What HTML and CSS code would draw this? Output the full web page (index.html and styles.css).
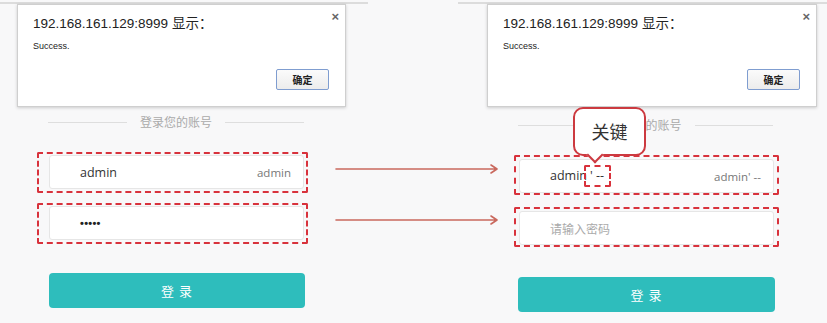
FILE: index.html
```html
<!DOCTYPE html>
<html lang="zh-CN">
<head>
<meta charset="utf-8">
<title>SQL 注入演示</title>
<link rel="stylesheet" href="styles.css">
</head>
<body>
<div class="stage">
  <section class="panel panel-left">
    <div class="strip"></div>
    <div class="dialog">
      <span class="close">×</span>
      <div class="d-title">192.168.161.129:8999 显示：</div>
      <div class="d-msg">Success.</div>
      <div class="d-actions"><button class="d-btn">确定</button></div>
    </div>
    <div class="form">
      <div class="divider"><span class="line"></span><span class="label">登录您的账号</span><span class="line"></span></div>
      <div class="mark mark-first"><div class="field"><span class="val">admin</span><span class="hint">admin</span></div></div>
      <div class="mark mark-second"><div class="field"><span class="dots">•••••</span></div></div>
      <button class="submit">登 录</button>
    </div>
  </section>

  <section class="panel panel-right">
    <div class="strip"></div>
    <div class="dialog">
      <span class="close">×</span>
      <div class="d-title">192.168.161.129:8999 显示：</div>
      <div class="d-msg">Success.</div>
      <div class="d-actions"><button class="d-btn">确定</button></div>
    </div>
    <div class="form">
      <div class="divider"><span class="line"></span><span class="label">登录您的账号</span><span class="line"></span></div>
      <div class="mark mark-first"><div class="field"><span class="val">admin<span class="key">' --</span></span><span class="hint">admin' --</span></div></div>
      <div class="mark mark-second"><div class="field"><span class="placeholder">请输入密码</span></div></div>
      <button class="submit">登 录</button>
    </div>
    <div class="callout">关键</div>
  </section>

  <svg class="arrows" width="827" height="323" viewBox="0 0 827 323" aria-hidden="true">
    <g fill="none" stroke="#c9685d" stroke-width="1.6" stroke-linecap="round" stroke-linejoin="round">
      <path d="M336 169 H497 M491 165 L497 169 L491 173"/>
      <path d="M336 220 H497 M491 216 L497 220 L491 224"/>
    </g>
  </svg>
</div>
</body>
</html>
```

FILE: styles.css
```css
* { box-sizing: border-box; }

html, body {
  margin: 0;
  padding: 0;
  background: #f8f8f9;
}

body {
  width: 827px;
  height: 323px;
  overflow: hidden;
  font-family: "Liberation Sans", "Noto Sans CJK SC", sans-serif;
}

.stage {
  position: relative;
  display: grid;
  grid-template-columns: 410px 417px;
  width: 827px;
  height: 323px;
}

.panel {
  position: relative;
  display: flex;
  flex-direction: column;
  align-items: flex-start;
}

.strip {
  height: 2px;
  margin-top: 2px;
  background: #dcdcdc;
}
.panel-left .strip { width: 368px; }
.panel-right .strip { width: 369px; margin-left: 48px; }

/* alert dialog */
.dialog {
  position: relative;
  height: 103px;
  padding: 0 15px;
  background: #ffffff;
  border: 1px solid #cfcfcf;
  box-shadow: 0 1px 3px rgba(0, 0, 0, 0.18);
  display: flex;
  flex-direction: column;
}
.panel-left .dialog { margin-left: 17px; width: 329px; }
.panel-right .dialog { margin-left: 77px; width: 330px; }

.close {
  position: absolute;
  top: 4px;
  right: 6px;
  font-size: 13px;
  font-weight: 700;
  line-height: 16px;
  color: #666;
}

.d-title {
  margin-top: 10px;
  font-size: 13.5px;
  line-height: 18px;
  color: #222;
}

.d-msg {
  margin-top: 6px;
  font-size: 9px;
  line-height: 14px;
  color: #222;
}

.d-actions {
  display: flex;
  justify-content: flex-end;
  margin-top: 16px;
}

.d-btn {
  width: 53px;
  height: 21px;
  margin-right: 1px;
  padding: 0;
  border: 1px solid #7f9dd0;
  border-radius: 2px;
  background: linear-gradient(#fbfbfb, #ececec);
  font-family: "Noto Sans CJK SC", sans-serif;
  font-size: 10px;
  font-weight: 700;
  color: #222;
}

/* login form */
.form {
  display: flex;
  flex-direction: column;
  align-items: flex-start;
}
.panel-left .form { margin-left: 37px; width: 271px; }
.panel-right .form { margin-left: 104px; width: 265px; }

.divider {
  display: flex;
  align-items: center;
  gap: 13px;
  height: 16px;
}
.panel-left .divider { margin: 7px 0 0 11px; width: 256px; }
.panel-right .divider { margin: 10px 0 0 4px; width: 255px; }

.divider .line {
  flex: 1;
  height: 1px;
  background: #dedede;
}
.divider .label {
  font-family: "Noto Sans CJK SC", sans-serif;
  font-size: 12px;
  line-height: 16px;
  color: #aaaaaa;
}

.mark {
  width: 100%;
  border: 2px dashed #d8323c;
  border-radius: 2px;
}
.panel-left .mark { padding: 1px 2px 2px 10px; }
.panel-left .mark-first { margin-top: 22px; }
.panel-left .mark-second { margin-top: 10px; }
.panel-right .mark { padding: 2px 3px 0 3px; }
.panel-right .mark-first { margin-top: 22px; }
.panel-right .mark-second { margin-top: 12px; }

.field {
  display: flex;
  align-items: center;
  justify-content: space-between;
  height: 34px;
  padding: 0 12px 0 30px;
  background: #ffffff;
  border: 1px solid #e6e6e6;
  border-radius: 3px;
}

.val {
  font-family: "Open Sans", sans-serif;
  font-size: 12.5px;
  color: #333;
}

.key {
  display: inline-block;
  margin-left: -3px;
  padding: 0 5px 0 4px;
  line-height: 18px;
  border: 2px dashed #d8323c;
  border-radius: 2px;
}

.hint {
  font-family: "Open Sans", sans-serif;
  font-size: 11.5px;
  color: #777;
}

.dots {
  font-family: "Liberation Sans", sans-serif;
  font-size: 11px;
  font-weight: 700;
  letter-spacing: 0.3px;
  color: #222;
}

.placeholder {
  font-family: "Noto Sans CJK SC", sans-serif;
  font-size: 12px;
  color: #aaaaaa;
}

.submit {
  height: 35px;
  padding: 0;
  border: none;
  border-radius: 4px;
  background: #2ebdbc;
  color: #ffffff;
  font-family: "Noto Sans CJK SC", sans-serif;
  font-size: 13px;
  letter-spacing: 1px;
}
.panel-left .submit { margin: 29px 0 0 12px; width: 256px; }
.panel-right .submit { margin: 30px 0 0 4px; width: 257px; }

/* annotation callout */
.callout {
  position: absolute;
  left: 163px;
  top: 107px;
  width: 73px;
  height: 49px;
  display: flex;
  align-items: center;
  justify-content: center;
  padding-bottom: 2px;
  background: #ffffff;
  border: 2px solid #cc3a40;
  border-radius: 10px;
  font-family: "Noto Sans CJK SC", sans-serif;
  font-size: 18px;
  color: #333;
}
.callout::after {
  content: "";
  position: absolute;
  left: 14px;
  bottom: -7px;
  width: 10px;
  height: 10px;
  background: #ffffff;
  border-right: 2px solid #cc3a40;
  border-bottom: 2px solid #cc3a40;
  transform: rotate(45deg);
}

.arrows {
  position: absolute;
  left: 0;
  top: 0;
  pointer-events: none;
}
```
